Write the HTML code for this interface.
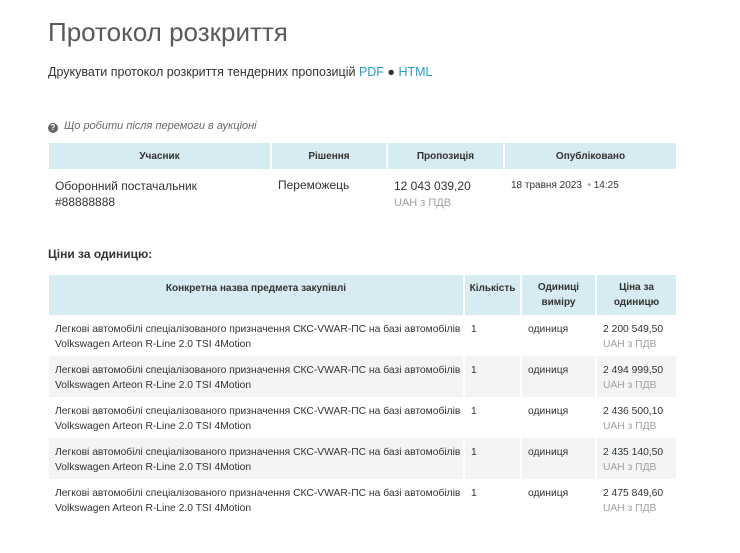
<!DOCTYPE html>
<html><head><meta charset="utf-8"><style>
body{margin:0;width:740px;height:553px;background:#fff;font-family:"Liberation Sans",sans-serif;color:#333;position:relative;overflow:hidden}
.a{position:absolute;white-space:nowrap}
table{position:absolute;border-collapse:separate;border-spacing:2px 0;table-layout:fixed;left:47px}
th{background:#d7ebf2;font-weight:bold;font-size:10px;color:#333;text-align:center;padding:0}
td{vertical-align:top;padding:0 6px;white-space:nowrap}
.g{color:#a0a0a0}
#t2 td{font-size:10.3px;line-height:15px;height:41px;padding-top:7px;box-sizing:border-box}
#t2 tr.s td{background:#f2f5f4}
</style></head><body>
<div class="a" style="left:48px;top:17px;font-size:26px;color:#5a5a5a">Протокол розкриття</div>
<div class="a" style="left:48px;top:65px;font-size:12.5px">Друкувати протокол розкриття тендерних пропозицій <span style="color:#2a9ec5">PDF</span> ● <span style="color:#2a9ec5">HTML</span></div>
<div class="a" style="left:48px;top:120px;font-size:11px;color:#666;font-style:italic"><span style="display:inline-block;width:10px;height:10px;border-radius:50%;background:#666;color:#fff;font-size:8px;text-align:center;line-height:10px;font-style:normal;font-weight:bold;vertical-align:-1px">?</span>&nbsp; Що робити після перемоги в аукціоні</div>
<table style="top:143px;width:631px">
<colgroup><col style="width:221px"><col style="width:114px"><col style="width:115px"><col style="width:171px"></colgroup>
<tr style="height:26px"><th>Учасник</th><th>Рішення</th><th>Пропозиція</th><th>Опубліковано</th></tr>
<tr><td style="font-size:12px;line-height:16px;padding-top:9px">Оборонний постачальник<br>#88888888</td><td style="font-size:12px;padding-top:9px">Переможець</td><td style="font-size:12px;line-height:16px;padding-top:9px">12 043 039,20<br><span class="g" style="font-size:11px">UAH з ПДВ</span></td><td style="font-size:10px;padding-top:11px">18 травня 2023 &nbsp;<span class="g">•</span> 14:25</td></tr>
</table>
<div class="a" style="left:48px;top:247px;font-size:12px;font-weight:bold">Ціни за одиницю:</div>
<table id="t2" style="top:275px;width:631px">
<colgroup><col style="width:414px"><col style="width:55px"><col style="width:73px"><col style="width:79px"></colgroup>
<tr style="height:40px"><th style="padding-bottom:14px">Конкретна назва предмета закупівлі</th><th style="padding-bottom:14px">Кількість</th><th style="line-height:15px">Одиниці<br>виміру</th><th style="line-height:15px">Ціна за<br>одиницю</th></tr>
<tr><td>Легкові автомобілі спеціалізованого призначення СКС-VWAR-ПС на базі автомобілів<br>Volkswagen Arteon R-Line 2.0 TSI 4Motion</td><td>1</td><td>одиниця</td><td>2 200 549,50<br><span class="g">UAH з ПДВ</span></td></tr>
<tr class="s"><td>Легкові автомобілі спеціалізованого призначення СКС-VWAR-ПС на базі автомобілів<br>Volkswagen Arteon R-Line 2.0 TSI 4Motion</td><td>1</td><td>одиниця</td><td>2 494 999,50<br><span class="g">UAH з ПДВ</span></td></tr>
<tr><td>Легкові автомобілі спеціалізованого призначення СКС-VWAR-ПС на базі автомобілів<br>Volkswagen Arteon R-Line 2.0 TSI 4Motion</td><td>1</td><td>одиниця</td><td>2 436 500,10<br><span class="g">UAH з ПДВ</span></td></tr>
<tr class="s"><td>Легкові автомобілі спеціалізованого призначення СКС-VWAR-ПС на базі автомобілів<br>Volkswagen Arteon R-Line 2.0 TSI 4Motion</td><td>1</td><td>одиниця</td><td>2 435 140,50<br><span class="g">UAH з ПДВ</span></td></tr>
<tr><td>Легкові автомобілі спеціалізованого призначення СКС-VWAR-ПС на базі автомобілів<br>Volkswagen Arteon R-Line 2.0 TSI 4Motion</td><td>1</td><td>одиниця</td><td>2 475 849,60<br><span class="g">UAH з ПДВ</span></td></tr>
</table>
</body></html>
